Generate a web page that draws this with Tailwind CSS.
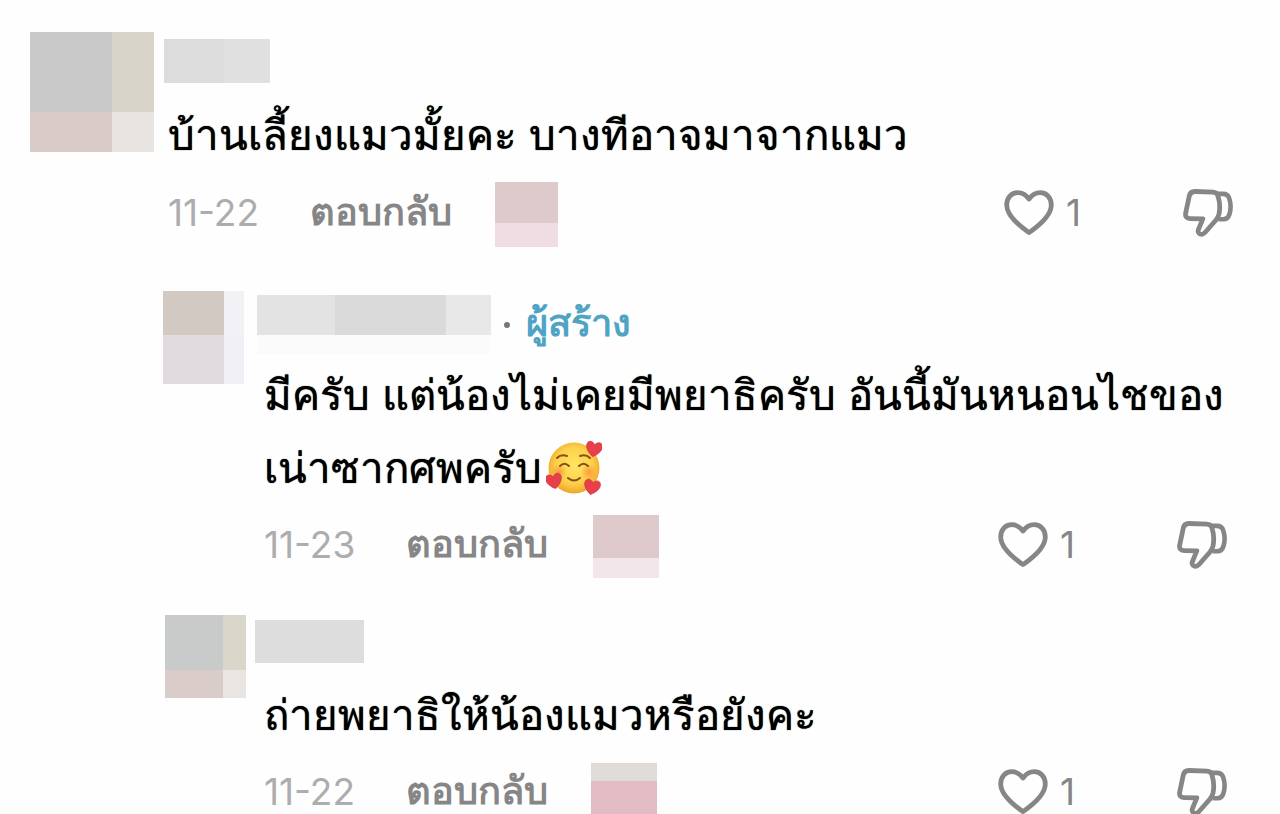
<!DOCTYPE html>
<html lang="th">
  <head>
    <meta charset="UTF-8" />
    <meta name="viewport" content="width=device-width, initial-scale=1.0" />
    <title>ความคิดเห็น</title>
    <script src="https://cdn.jsdelivr.net/npm/@tailwindcss/browser@4"></script>
  </head>
  <body class="bg-[#fefefe] text-black font-['Inter',sans-serif]">
    <!-- Shared icons -->
    <svg class="hidden" aria-hidden="true">
      <symbol id="heart" viewBox="0 0 50 46">
        <path d="M25 9C22 5 18 2.7 13.7 2.7C7.5 2.7 2.7 7.7 2.7 15C2.7 24 10.5 32.5 25 42.6C39.5 32.5 47.3 24 47.3 15C47.3 7.7 42.5 2.7 36.3 2.7C32 2.7 28 5 25 9Z" fill="none" stroke="currentColor" stroke-width="4.8" stroke-linejoin="round" />
      </symbol>
      <symbol id="dislike" viewBox="0 0 50 48">
        <path d="M12 2.5L30 3.2C32.5 3.3 34 4.2 34.8 6.5C37 13 37 20 36 25C35.4 27.5 34.5 29 33 31L22 43.5C20 45.8 17.5 45.6 16.2 44.5C15 43.4 14.8 42 15.5 40.3L19.8 29.8L7 29.6C3.6 29.5 2 27.4 2.7 24L6.3 7C7 4 8.8 2.4 12 2.5Z" fill="none" stroke="currentColor" stroke-width="4.8" stroke-linejoin="round" />
        <path d="M34.5 4.9H40C43.3 4.9 45.2 6.3 46.2 9.2C47.8 14 48 20 46.5 25C45.5 28.5 43.7 30.2 40.5 30.2H35.5" fill="none" stroke="currentColor" stroke-width="4.6" />
      </symbol>
    </svg>

    <main class="h-screen overflow-hidden pt-8">
      <!-- Comment -->
      <article class="flex items-start pl-[30px] pr-[47px]">
        <div class="grid h-[120px] w-[124px] shrink-0 grid-cols-[82px_1fr] grid-rows-[2fr_1fr]">
          <span class="bg-[#c9c9c9]"></span>
          <span class="bg-[#d8d4c9]"></span>
          <span class="bg-[#d9cbc8]"></span>
          <span class="bg-[#e8e4e1]"></span>
        </div>
        <div class="min-w-0 flex-1 pl-[10px] pt-[7px]">
          <div class="flex h-11 w-[106px]">
            <span class="w-[60px] bg-[#dcdcdc]"></span>
            <span class="flex-1 bg-[#e0e0e0]"></span>
          </div>
          <p class="mt-4 pl-1 text-[42px] leading-[72px] [text-shadow:0_0_1px_#000]">บ้านเลี้ยงแมวมั้ยคะ บางทีอาจมาจากแมว</p>
          <div class="mt-[11px] flex h-[65px] items-center pb-1 pl-1 text-[37px] leading-[44px]">
            <time class="w-[142px] text-[#adadad]">11-22</time>
            <button type="button" class="w-[185px] pb-1 text-left text-[38px] font-bold text-[#868686]">ตอบกลับ</button>
            <div class="w-[63px] self-start">
              <div class="h-[41px] bg-[#dfcacb]"></div>
              <div class="h-6 bg-[#f0dce3]"></div>
            </div>
            <button type="button" aria-label="ถูกใจ 1" class="ml-auto flex w-[179px] items-center gap-3 text-[#868686]">
              <svg class="h-[46px] w-[50px]"><use href="#heart" /></svg>
              1
            </button>
            <button type="button" aria-label="ไม่ชอบ" class="text-[#868686]">
              <svg class="h-12 w-[50px]"><use href="#dislike" /></svg>
            </button>
          </div>
        </div>
      </article>

      <!-- Reply from the creator -->
      <article class="mt-11 flex items-start pl-[163px] pr-[53px]">
        <div class="grid h-[93px] w-[81px] shrink-0 grid-cols-[3fr_1fr] grid-rows-[44px_1fr]">
          <span class="bg-[#d2c9c3]"></span>
          <span class="bg-[#f2f1f6]"></span>
          <span class="bg-[#e1dbdf]"></span>
          <span class="bg-[#f0eff5]"></span>
        </div>
        <div class="min-w-0 flex-1 pl-[13px] pt-1">
          <div class="flex h-[59px] items-center">
            <div class="grid h-full w-[234px] grid-cols-[78px_1fr_45px] grid-rows-[40px_1fr]">
              <span class="bg-[#e3e3e3]"></span>
              <span class="bg-[#dadada]"></span>
              <span class="bg-[#e8e8e8]"></span>
              <span class="col-span-3 bg-[#fbfbfb]"></span>
            </div>
            <span class="ml-[13px] size-[6px] rounded-full bg-[#777777]"></span>
            <span class="ml-4 pb-1 text-[38px] font-bold leading-[55px] text-[#4fa3c4]">ผู้สร้าง</span>
          </div>
          <p class="mt-1 pl-[7px] text-[42px] leading-[73px] [text-shadow:0_0_1px_#000]">มีครับ แต่น้องไม่เคยมีพยาธิครับ อันนี้มันหนอนไชของ<br />เน่าซากศพครับ<svg role="img" aria-label="🥰" class="mb-2 ml-1 inline-block size-[56px] align-middle" viewBox="0 0 56 56">
              <defs>
                <radialGradient id="face" cx="50%" cy="45%" r="55%">
                  <stop offset="0" stop-color="#ffe663" />
                  <stop offset=".65" stop-color="#fdd04a" />
                  <stop offset="1" stop-color="#eea62c" />
                </radialGradient>
                <radialGradient id="blush">
                  <stop offset="0" stop-color="#f98a3c" stop-opacity=".75" />
                  <stop offset="1" stop-color="#f98a3c" stop-opacity="0" />
                </radialGradient>
                <path id="love" d="M0 7C-5 4-8-.5-7-4C-6-7.500-1.500-7 0-3.500C1.500-7 6-7.500 7-4C8-.5 5 4 0 7Z" fill="#e8404a" stroke="#cf2f3b" stroke-width=".6" />
              </defs>
              <circle cx="28" cy="28" r="25.500" fill="url(#face)" />
              <circle cx="13" cy="32" r="8" fill="url(#blush)" />
              <circle cx="43" cy="32" r="8" fill="url(#blush)" />
              <g fill="none" stroke="#81501c" stroke-width="2" stroke-linecap="round">
                <path d="M11 18Q15 14 21 16M34 16Q40 14 44 18" />
                <path d="M14 26Q18.500 21.500 23 26M33 26Q37.500 21.500 42 26" />
                <path d="M22 38Q28 43 34 38" />
              </g>
              <use href="#love" transform="translate(48 9) rotate(10) scale(1.1)" />
              <use href="#love" transform="translate(8 41) rotate(-12) scale(1.1)" />
              <use href="#love" transform="translate(46 47) rotate(12) scale(1.1)" />
            </svg></p>
          <div class="mt-[11px] flex h-[63px] items-center pb-1 pl-[7px] text-[37px] leading-[44px]">
            <time class="w-[142px] text-[#adadad]">11-23</time>
            <button type="button" class="w-[187px] pb-1 text-left text-[38px] font-bold text-[#868686]">ตอบกลับ</button>
            <div class="w-[66px] self-start">
              <div class="h-[43px] bg-[#dfcacb]"></div>
              <div class="h-5 bg-[#f3e6eb]"></div>
            </div>
            <button type="button" aria-label="ถูกใจ 1" class="ml-auto flex w-[179px] items-center gap-3 text-[#868686]">
              <svg class="h-[46px] w-[50px]"><use href="#heart" /></svg>
              1
            </button>
            <button type="button" aria-label="ไม่ชอบ" class="text-[#868686]">
              <svg class="h-12 w-[50px]"><use href="#dislike" /></svg>
            </button>
          </div>
        </div>
      </article>

      <!-- Reply -->
      <article class="mt-[37px] flex items-start pl-[165px] pr-[53px]">
        <div class="grid h-[83px] w-[81px] shrink-0 grid-cols-[58px_1fr] grid-rows-[2fr_1fr]">
          <span class="bg-[#c9caca]"></span>
          <span class="bg-[#d9d6ca]"></span>
          <span class="bg-[#dacdc9]"></span>
          <span class="bg-[#e9e5e2]"></span>
        </div>
        <div class="min-w-0 flex-1 pl-[9px] pt-[5px]">
          <div class="h-[43px] w-[109px] bg-[#dddddd]"></div>
          <p class="mt-4 pl-[9px] text-[42px] leading-[72px] [text-shadow:0_0_1px_#000]">ถ่ายพยาธิให้น้องแมวหรือยังคะ</p>
          <div class="mt-3 flex h-[62px] items-center pb-1 pl-[9px] text-[37px] leading-[44px]">
            <time class="w-[142px] text-[#adadad]">11-22</time>
            <button type="button" class="w-[185px] pb-1 text-left text-[38px] font-bold text-[#868686]">ตอบกลับ</button>
            <div class="w-[66px] self-start">
              <div class="h-[18px] bg-[#dedbd8]"></div>
              <div class="h-[42px] bg-[#e2bbc4]"></div>
            </div>
            <button type="button" aria-label="ถูกใจ 1" class="ml-auto flex w-[179px] items-center gap-3 text-[#868686]">
              <svg class="h-[46px] w-[50px]"><use href="#heart" /></svg>
              1
            </button>
            <button type="button" aria-label="ไม่ชอบ" class="text-[#868686]">
              <svg class="h-12 w-[50px]"><use href="#dislike" /></svg>
            </button>
          </div>
        </div>
      </article>
    </main>
  </body>
</html>
